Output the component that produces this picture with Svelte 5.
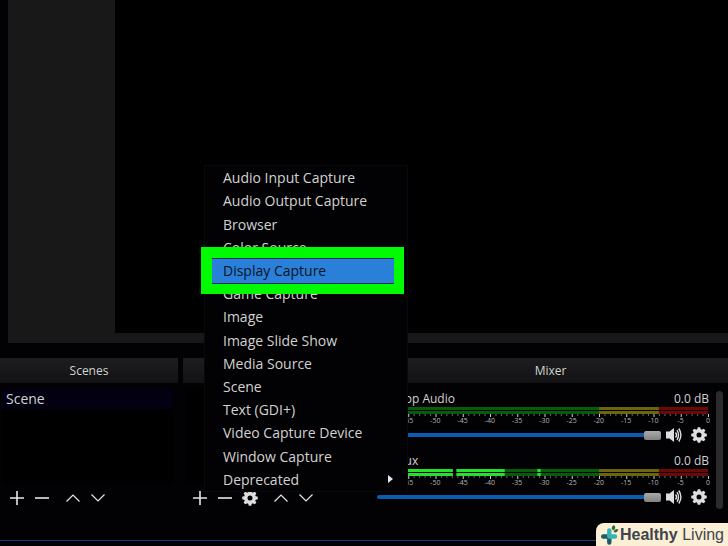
<script>
  const sources = [
    'Audio Input Capture',
    'Audio Output Capture',
    'Browser',
    'Color Source',
    'Display Capture',
    'Game Capture',
    'Image',
    'Image Slide Show',
    'Media Source',
    'Scene',
    'Text (GDI+)',
    'Video Capture Device',
    'Window Capture',
    'Deprecated',
  ];

  // segments are [from, to] in dB
  let channels = $state([
    { id: 'desktop', name: 'Desktop Audio', volume: 100, lit: [] },
    { id: 'mic', name: 'Mic/Aux', volume: 100, lit: [[-60, -46.8], [-46.2, -37.3], [-31.3, -30.7]] },
  ]);

  const zones = [
    { from: -60, to: -20, cls: 'green' },
    { from: -20, to: -9, cls: 'yellow' },
    { from: -9, to: 0, cls: 'red' },
  ];
  const ticks = Array.from({ length: 61 }, (_, i) => i - 60);

  let selected = $state('Display Capture');

  const pct = (db) => `${((db + 60) / 60) * 100}%`;
  const span = (a, b) => `${((b - a) / 60) * 100}%`;
</script>

{#snippet gear()}
  <svg width="18" height="18" viewBox="-9 -9 18 18" fill="#dedede">
    {#each [0, 45, 90, 135, 180, 225, 270, 315] as a}
      <path d="M-2 -5 L-1.2 -7.8 L1.2 -7.8 L2 -5 Z" transform="rotate({a})" />
    {/each}
    <circle r="4.2" fill="none" stroke="#dedede" stroke-width="3.4" />
  </svg>
{/snippet}

{#snippet plus()}
  <svg width="16" height="16" viewBox="0 0 16 16"><path d="M8 1v14M1 8h14" /></svg>
{/snippet}

{#snippet minus()}
  <svg width="16" height="16" viewBox="0 0 16 16"><path d="M1 8h14" /></svg>
{/snippet}

{#snippet up()}
  <svg class="thin" width="16" height="16" viewBox="0 0 16 16"><path d="M1.5 11.5L8 5l6.5 6.5" /></svg>
{/snippet}

{#snippet down()}
  <svg class="thin" width="16" height="16" viewBox="0 0 16 16"><path d="M1.5 4.5L8 11l6.5-6.5" /></svg>
{/snippet}

<div class="app">
  <main class="preview">
    <div class="canvas"></div>
  </main>

  <div class="docks">
    <section class="dock">
      <h2>Scenes</h2>
      <ul class="list">
        <li><button class="scene">Scene</button></li>
      </ul>
      <div class="toolbar">
        <button aria-label="Add scene">{@render plus()}</button>
        <button aria-label="Remove scene">{@render minus()}</button>
        <button class="spaced" aria-label="Move scene up">{@render up()}</button>
        <button aria-label="Move scene down">{@render down()}</button>
      </div>
    </section>

    <section class="dock" aria-label="Sources">
      <div class="title"></div>
      <ul class="list"></ul>
      <div class="toolbar">
        <button aria-label="Add source">{@render plus()}</button>
        <button aria-label="Remove source">{@render minus()}</button>
        <button class="cog" aria-label="Source properties">{@render gear()}</button>
        <button class="spaced" aria-label="Move source up">{@render up()}</button>
        <button aria-label="Move source down">{@render down()}</button>
      </div>

      <div class="menu" role="menu">
        {#each sources as name}
          <button
            class="item"
            class:selected={selected === name}
            role="menuitem"
            onclick={() => (selected = name)}
          >
            <span>{name}</span>
            {#if name === 'Deprecated'}
              <svg width="5" height="8" viewBox="0 0 5 8"><path d="M0 0L5 4L0 8Z" fill="#e8e8e8" /></svg>
            {/if}
          </button>
        {/each}
      </div>
    </section>

    <section class="dock">
      <h2>Mixer</h2>
      <div class="mixer">
        <div class="channels">
          {#each channels as ch}
            <div class="channel">
              <div class="names">
                <label for={ch.id}>{ch.name}</label>
                <span>0.0 dB</span>
              </div>
              <svg class="meter" width="100%" height="18">
                {#each [0, 4] as y}
                  {#each zones as z}
                    <rect class={z.cls} x={pct(z.from)} {y} width={span(z.from, z.to)} height="3" />
                  {/each}
                  {#each ch.lit as [a, b]}
                    <rect class="lit" x={pct(a)} {y} width={span(a, b)} height="3" />
                  {/each}
                {/each}
                {#if ch.lit.length}
                  <rect x={pct(-46.8)} y="0" width={span(-46.8, -46.2)} height="7" />
                {/if}
                {#each ticks as db}
                  <rect class="tick" class:major={db % 5 === 0} x={pct(db)} y="7" width="1" height={db % 5 === 0 ? 3 : 2} />
                  {#if db % 5 === 0}
                    <text x={pct(db)} y="16">{db}</text>
                  {/if}
                {/each}
              </svg>
              <div class="controls">
                <input id={ch.id} type="range" min="0" max="100" bind:value={ch.volume} />
                <button aria-label="Mute {ch.name}">
                  <svg width="18" height="16" viewBox="0 0 18 16">
                    <path d="M1 4.5h3.5L9 1v14L4.5 11.5H1Z" fill="#dedede" />
                    <path d="M10.5 5.5Q12.5 8 10.5 10.5M12 3.2Q15 8 12 12.8M13.8 1.5Q18 8 13.8 14.5" fill="none" stroke="#dedede" stroke-width="1.4" />
                  </svg>
                </button>
                <button aria-label="{ch.name} settings">{@render gear()}</button>
              </div>
            </div>
          {/each}
        </div>
        <div class="scrollbar"></div>
      </div>
    </section>
  </div>

  <footer class="status"></footer>

  <div class="brand">
    <svg width="19" height="22" viewBox="0 0 19 22">
      <path d="M3.2 12.5H8M9.300 14v4.500" stroke="#1f5a66" stroke-width="4.400" stroke-linecap="round" />
      <path d="M9.300 6.500v6H15" fill="none" stroke="#36b3b8" stroke-width="4.400" stroke-linecap="round" stroke-linejoin="round" />
      <path d="M13 6.500q-3-3 1-5.500q3 3-1 5.500M13.500 8q1-4 5-2.500q-1.500 4-5 2.500" fill="#2f6a35" />
    </svg>
    <span><b>Healthy</b> Living</span>
  </div>
</div>

<style>
  :global(body) {
    margin: 0;
    background: #020104;
  }
  .app {
    position: relative;
    display: flex;
    flex-direction: column;
    min-height: 100vh;
    overflow: hidden;
    background: #020104;
    color: #d2d2d0;
    font-family: "Open Sans", "Noto Sans", sans-serif;
    font-size: 14px;
  }
  button {
    padding: 0;
    border: 0;
    background: none;
    color: inherit;
    font: inherit;
  }
  .preview {
    flex: 1;
    display: flex;
    margin: 0 0 15px 8px;
    padding: 0 0 10px 107px;
    background: #171817;
  }
  .canvas {
    flex: 1;
    background: #000;
  }
  .docks {
    display: grid;
    grid-template-columns: 178fr 185fr 355fr;
    gap: 5px;
    height: 153px;
  }
  .dock {
    position: relative;
    display: flex;
    flex-direction: column;
    min-width: 0;
  }
  h2,
  .title {
    height: 25px;
    margin: 0;
    background: linear-gradient(#1d1c1f, #121114);
    font-size: 12px;
    font-weight: 400;
    line-height: 25px;
    text-align: center;
  }
  .list {
    flex: 1;
    margin: 5px 5px 0 2px;
    padding: 0;
    background: #000;
    list-style: none;
  }
  .scene {
    width: 100%;
    padding-left: 4px;
    background: #020011;
    line-height: 21px;
    text-align: left;
  }
  .toolbar {
    display: flex;
    height: 25px;
    padding: 0 0 4px 4px;
  }
  .toolbar button {
    display: grid;
    place-items: center;
    width: 25px;
  }
  .toolbar .spaced {
    margin-left: 6px;
  }
  .toolbar path {
    stroke: #e6e6e6;
    stroke-width: 1.6;
    fill: none;
  }
  .toolbar .thin path {
    stroke-width: 1.2;
  }
  .toolbar .cog path {
    stroke: none;
    fill: #dedede;
  }
  .menu {
    position: absolute;
    bottom: 22px;
    left: 21px;
    z-index: 2;
    box-sizing: border-box;
    display: grid;
    grid-auto-rows: 1fr;
    width: 204px;
    height: 327px;
    border: 1px solid #09090b;
    background: #020104;
  }
  .item {
    position: relative;
    display: flex;
    align-items: center;
    justify-content: space-between;
    padding: 0 14px 0 18px;
    text-align: left;
  }
  .item.selected {
    z-index: 1;
    color: #07131f;
  }
  .item.selected::before {
    content: "";
    position: absolute;
    inset: -12px 3px -12px -4px;
    z-index: -1;
    border: 11px solid #00fa00;
    border-width: 11px 10px 10px 11px;
    background: #2a80d8;
    box-shadow: inset 0 1px #10305a, inset 0 -1px #10305a;
  }
  .mixer {
    display: flex;
    padding: 7px 5px 0 0;
  }
  .channels {
    flex: 1;
  }
  .channel {
    height: 62px;
  }
  .names {
    display: flex;
    justify-content: space-between;
    padding-right: 3px;
    font-size: 12px;
    line-height: 17px;
  }
  .meter {
    display: block;
    box-sizing: border-box;
    padding: 0 4px 0 8px;
    overflow: visible;
  }
  .green { fill: #075c0b; }
  .yellow { fill: #6b650c; }
  .red { fill: #6d0708; }
  .lit { fill: #26e02e; }
  .tick { fill: #666; }
  .tick.major { fill: #ccc; }
  .meter text {
    fill: #b5b5b5;
    font-size: 7px;
    text-anchor: middle;
  }
  .controls {
    display: flex;
    align-items: center;
    height: 20px;
    padding: 0 4px;
  }
  .controls button {
    display: grid;
    place-items: center;
    width: 25px;
    height: 20px;
  }
  .controls button:last-child {
    justify-items: end;
    width: 22px;
  }
  input[type="range"] {
    flex: 1;
    min-width: 0;
    height: 10px;
    margin: 0;
    appearance: none;
    background: none;
  }
  input[type="range"]::-webkit-slider-runnable-track {
    height: 4px;
    border-radius: 2px;
    background: #0b5cb0;
  }
  input[type="range"]::-webkit-slider-thumb {
    appearance: none;
    width: 17px;
    height: 9px;
    margin-top: -2px;
    border-radius: 2px;
    background: linear-gradient(#aaa, #828282);
  }
  .scrollbar {
    width: 7px;
    height: 118px;
    margin: 1px 0 0 4px;
    border-radius: 4px;
    background: #2b2b2d;
  }
  .status {
    height: 5px;
    margin-top: 29px;
    border-top: 1px solid #1d3d7c;
  }
  .brand {
    position: absolute;
    right: 0;
    bottom: 0;
    display: flex;
    align-items: center;
    gap: 1px;
    height: 23px;
    padding: 0 4px 0 4px;
    border-radius: 8px 0 0 0;
    background: #fbefd5;
    color: #40444c;
    font-family: "Liberation Sans", sans-serif;
    font-size: 16px;
  }
</style>
